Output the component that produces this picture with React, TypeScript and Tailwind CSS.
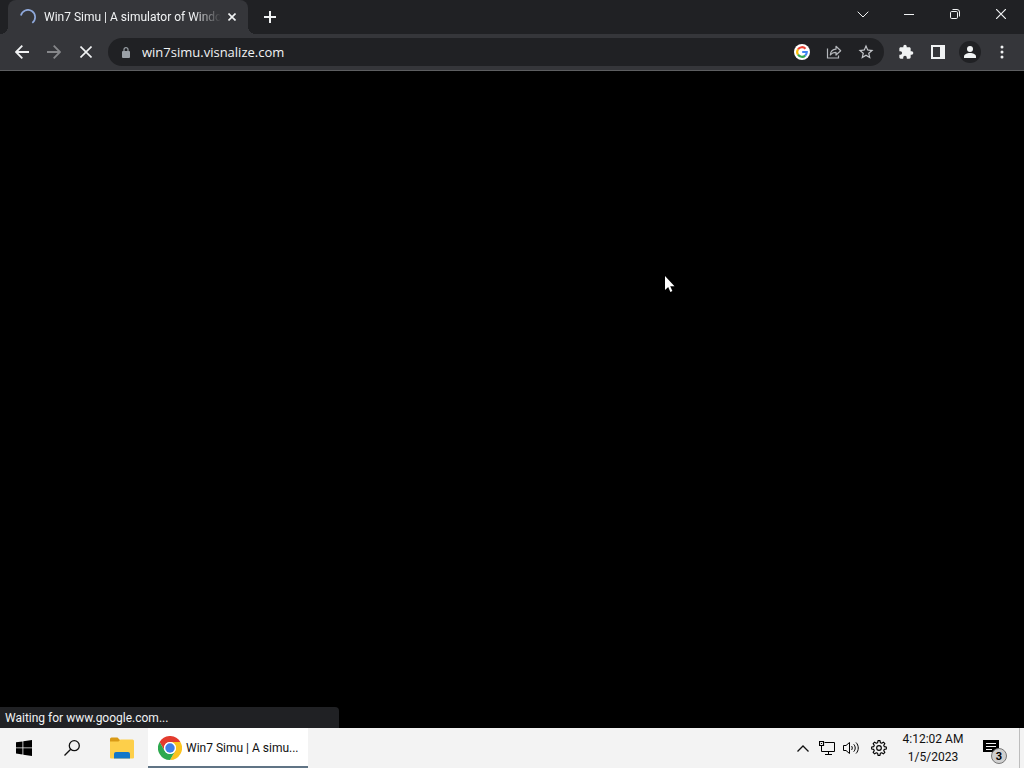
import React, { useState } from 'react';

const ICON_BTN = 'flex h-7 w-8 shrink-0 items-center justify-center rounded-full';

function ChromeLogo() {
  return (
    <svg width="24" height="24" viewBox="0 0 48 48" className="shrink-0">
      <circle cx="24" cy="24" r="24" fill="#fff" />
      <path d="M3.2 12A24 24 0 0 1 44.8 12H24a12 12 0 0 0-10.4 18z" fill="#e33b2e" />
      <path d="M44.8 12A24 24 0 0 1 24 48l10.4-18A12 12 0 0 0 24 12z" fill="#fcc31e" />
      <path d="M24 48A24 24 0 0 1 3.2 12l10.4 18a12 12 0 0 0 20.8 0z" fill="#2da94f" />
      <circle cx="24" cy="24" r="12" fill="#fff" />
      <circle cx="24" cy="24" r="9.4" fill="#3f7fe8" />
    </svg>
  );
}

function FolderIcon() {
  return (
    <svg width="24" height="22" viewBox="0 0 24 22">
      <path d="M0 2a1.500 1.500 0 0 1 1.500-1.500h6L10 3v4H0z" fill="#d99a16" />
      <path d="M0 4.500h8.500L10.500 2.500H22.500A1.500 1.500 0 0 1 24 4v16.500a1 1 0 0 1-1 1H1a1 1 0 0 1-1-1z" fill="#fdcf4a" />
      <path d="M4 21.500V17a2 2 0 0 1 2-2h12a2 2 0 0 1 2 2v4.500z" fill="#1277c9" />
    </svg>
  );
}

function GoogleBadge() {
  return (
    <svg width="16" height="16" viewBox="0 0 16 16">
      <circle cx="8" cy="8" r="8" fill="#fff" />
      <g fill="none" strokeWidth="2.100">
        <path d="M4 5.300A4.800 4.800 0 0 1 11.500 4.700" stroke="#ea4335" />
        <path d="M4 5.300A4.800 4.800 0 0 0 4 10.700" stroke="#fbbc05" />
        <path d="M4 10.700A4.800 4.800 0 0 0 11.200 11.600" stroke="#34a853" />
        <path d="M11.200 11.600A4.800 4.800 0 0 0 12.800 8H8.200" stroke="#4285f4" />
      </g>
    </svg>
  );
}

function TabStrip() {
  return (
    <div className="flex h-[34px] items-stretch pl-2 text-[#f1f3f4]">
      <div className="relative flex w-60 items-center rounded-t-lg bg-[#35363a] pl-3 pr-2">
        <span className="absolute -left-2 bottom-0 h-2 w-2 bg-[radial-gradient(circle_at_0_0,transparent_8px,#35363a_8px)]" />
        <span className="absolute -right-2 bottom-0 h-2 w-2 bg-[radial-gradient(circle_at_100%_0,transparent_8px,#35363a_8px)]" />
        <svg width="16" height="16" viewBox="0 0 16 16" fill="none" className="shrink-0">
          <path d="M.9 6.500A7.200 7.200 0 1 1 12.300 13.800" stroke="#8fa9dc" strokeWidth="1.700" />
        </svg>
        <button
          type="button"
          role="tab"
          aria-selected="true"
          className="ml-2 w-[180px] whitespace-nowrap text-left [mask-image:linear-gradient(to_right,#000_150px,transparent_177px)]"
        >
          Win7 Simu | A simulator of Windo
        </button>
        <button type="button" aria-label="Close tab" className="flex h-4 w-4 shrink-0 items-center justify-center">
          <svg width="8" height="8" viewBox="0 0 8 8" stroke="currentColor" strokeWidth="1.600">
            <path d="M.5.5l7 7M7.500.5l-7 7" />
          </svg>
        </button>
      </div>
      <button type="button" aria-label="New tab" className="ml-2 flex w-7 items-center justify-center">
        <svg width="12" height="12" viewBox="0 0 12 12" stroke="currentColor" strokeWidth="2">
          <path d="M6 0v12M0 6h12" />
        </svg>
      </button>

      <div className="ml-auto flex h-7">
        <button type="button" aria-label="Search tabs" className="flex w-[46px] items-center justify-center">
          <svg width="12" height="7" viewBox="0 0 12 7" fill="none" stroke="currentColor">
            <path d="M.7.7L6 6 11.300.7" />
          </svg>
        </button>
        <button type="button" aria-label="Minimize" className="flex w-[46px] items-center justify-center">
          <svg width="10" height="10" viewBox="0 0 10 10" stroke="currentColor">
            <path d="M0 5.500h10" />
          </svg>
        </button>
        <button type="button" aria-label="Restore" className="flex w-[46px] items-center justify-center">
          <svg width="10" height="10" viewBox="0 0 10 10" fill="none" stroke="currentColor">
            <rect x=".5" y="2.500" width="7" height="7" rx="1.200" />
            <path d="M2.500 .5H7a2.500 2.500 0 0 1 2.500 2.500v4.500" />
          </svg>
        </button>
        <button type="button" aria-label="Close" className="flex w-[46px] items-center justify-center">
          <svg width="10" height="10" viewBox="0 0 10 10" stroke="currentColor" strokeWidth="1.200">
            <path d="M0 0l10 10M10 0L0 10" />
          </svg>
        </button>
      </div>
    </div>
  );
}

function Toolbar() {
  const [url, setUrl] = useState('win7simu.visnalize.com');

  return (
    <div className="flex h-[37px] items-center border-b border-[#5d5e60] bg-[#35363a] px-1.5 text-[#f1f3f4]">
      <button type="button" aria-label="Back" className={ICON_BTN}>
        <svg width="14" height="14" viewBox="0 0 14 14" fill="none" stroke="currentColor" strokeWidth="1.800">
          <path d="M14 7H1.500M7.300 .7L1 7l6.300 6.300" />
        </svg>
      </button>
      <button type="button" aria-label="Forward" className={`${ICON_BTN} text-[#86878a]`}>
        <svg width="14" height="14" viewBox="0 0 14 14" fill="none" stroke="currentColor" strokeWidth="1.800">
          <path d="M0 7h12.500M6.700 .7L13 7l-6.300 6.300" />
        </svg>
      </button>
      <button type="button" aria-label="Stop loading" className={ICON_BTN}>
        <svg width="12" height="12" viewBox="0 0 12 12" stroke="currentColor" strokeWidth="1.600">
          <path d="M.5.5l11 11M11.500.5l-11 11" />
        </svg>
      </button>

      <div className="mx-1.5 flex h-7 min-w-0 flex-1 items-center rounded-full bg-[#202124] pl-3.5 pr-0.5">
        <svg width="8" height="11" viewBox="0 0 8 11" fill="none" className="shrink-0">
          <rect y="4" width="8" height="7" rx="1" fill="#9aa0a6" />
          <path d="M2 4.500V2.600a2 2 0 0 1 4 0v1.900" stroke="#9aa0a6" strokeWidth="1.200" />
        </svg>
        <input
          type="text"
          aria-label="Address"
          value={url}
          onChange={e => setUrl(e.target.value)}
          className="ml-3 min-w-0 flex-1 bg-transparent font-['Open_Sans','Noto_Sans',sans-serif] text-[13px] leading-5 outline-none"
        />
        <button type="button" aria-label="Search with Google" className={ICON_BTN}>
          <GoogleBadge />
        </button>
        <button type="button" aria-label="Share" className={`${ICON_BTN} text-[#b4b7bb]`}>
          <svg width="16" height="14" viewBox="0 0 16 14" fill="none" stroke="currentColor" strokeWidth="1.200">
            <path d="M1.500 3.500v9.500h11v-2.500" />
            <path d="M4.300 10c.3-3.600 2.200-5.600 5.700-5.800V1.300L14.700 5.700 10 10V7.300C7.500 7.300 5.700 8.100 4.300 10z" strokeLinejoin="round" />
          </svg>
        </button>
        <button type="button" aria-label="Bookmark this tab" className={`${ICON_BTN} text-[#c4c7cb]`}>
          <svg width="18" height="18" viewBox="0 0 24 24" fill="currentColor">
            <path d="M22 9.240l-7.190-.62L12 2 9.190 8.630 2 9.240l5.460 4.730L5.820 21 12 17.270 18.180 21l-1.630-7.030L22 9.240zM12 15.400l-3.760 2.270 1-4.280-3.320-2.880 4.380-.38L12 6.100l1.710 4.040 4.380.38-3.320 2.880 1 4.280L12 15.400z" />
          </svg>
        </button>
      </div>

      <button type="button" aria-label="Extensions" className={ICON_BTN}>
        <svg width="16" height="16" viewBox="0 0 24 24" fill="currentColor">
          <path d="M20.500 11H19V7c0-1.100-.9-2-2-2h-4V3.500a2.500 2.500 0 0 0-5 0V5H4c-1.100 0-1.990.9-1.990 2v3.800H3.500a2.700 2.700 0 0 1 0 5.400H2V20c0 1.100.9 2 2 2h3.800v-1.500a2.700 2.700 0 0 1 5.400 0V22H17c1.100 0 2-.9 2-2v-4h1.500a2.500 2.500 0 0 0 0-5z" />
        </svg>
      </button>
      <button type="button" aria-label="Side panel" className={ICON_BTN}>
        <svg width="14" height="14" viewBox="0 0 14 14">
          <path fillRule="evenodd" d="M0 0h14v14H0zM2 2v10h7V2z" fill="currentColor" />
        </svg>
      </button>
      <button type="button" aria-label="Profile" className={ICON_BTN}>
        <svg width="22" height="22" viewBox="0 0 22 22">
          <circle cx="11" cy="11" r="11" fill="#202124" />
          <circle cx="11" cy="8" r="3" fill="#f1f3f4" />
          <path d="M5 17v-1.500C5 13.300 8 12 11 12s6 1.300 6 3.500V17z" fill="#f1f3f4" />
        </svg>
      </button>
      <button type="button" aria-label="Menu" className={ICON_BTN}>
        <svg width="4" height="14" viewBox="0 0 4 14" fill="currentColor">
          <circle cx="2" cy="2" r="1.500" />
          <circle cx="2" cy="7" r="1.500" />
          <circle cx="2" cy="12" r="1.500" />
        </svg>
      </button>
    </div>
  );
}

function SystemTray() {
  return (
    <div className="ml-auto flex items-stretch">
      <button type="button" aria-label="Show hidden icons" className="flex w-6 items-center justify-center">
        <svg width="12" height="7" viewBox="0 0 12 7" fill="none" stroke="currentColor" strokeWidth="1.300">
          <path d="M.5 6.500L6 1l5.500 5.500" />
        </svg>
      </button>
      <button type="button" aria-label="Network" className="flex w-6 items-center justify-center">
        <svg width="16" height="14" viewBox="0 0 16 14" fill="none" stroke="#000">
          <path d="M5.500 1.500h10v9h-13v-6M9.500 10.500v3M6 13.500h7" />
          <path d="M.5.5h4v4h-4z" strokeWidth="1.200" />
          <path d="M2 2.500h1" />
        </svg>
      </button>
      <button type="button" aria-label="Volume" className="flex w-6 items-center justify-center">
        <svg width="17" height="14" viewBox="0 0 17 14" fill="none" stroke="#000">
          <path d="M.5 4.500H3L6.500 1.500v11L3 9.500H.5z" />
          <path d="M8.500 5c1 1 1 3 0 4M10.700 3.300c2 2 2 5.400 0 7.400M13 1.500c3 3 3 8 0 11" />
        </svg>
      </button>
      <button type="button" aria-label="Settings" className="flex w-8 items-center justify-center">
        <svg width="16" height="16" viewBox="0 0 24 24" fill="none" stroke="#000" strokeWidth="1.700" strokeLinejoin="round">
          <path d="M10.500 1h3l.5 3 2.100.9L18.600 3.200l2.200 2.200-1.700 2.500.9 2.100 3 .5v3l-3 .5-.9 2.100 1.700 2.500-2.200 2.200-2.500-1.700-2.100.9-.5 3h-3l-.5-3-2.100-.9-2.500 1.700-2.200-2.200 1.700-2.500L4 14l-3-.5v-3l3-.5.9-2.100L3.200 5.400l2.200-2.200 2.500 1.700L10 4z" />
          <circle cx="12" cy="12" r="3.500" />
        </svg>
      </button>
      <button type="button" className="w-[76px] text-center leading-[18px]">
        <span className="block whitespace-nowrap">4:12:02 AM</span>
        <span className="block whitespace-nowrap">1/5/2023</span>
      </button>
      <button type="button" aria-label="3 notifications" className="relative flex w-12 items-center justify-center">
        <svg width="24" height="24" viewBox="0 0 24 24">
          <path d="M0 4h16v12h-4v3.500L8.500 16H0z" fill="#000" />
          <path d="M3 7.500h10M3 10.500h10M3 13.500h6" stroke="#f3f3f3" />
        </svg>
        <span className="absolute bottom-1 right-3 flex h-4 w-4 items-center justify-center rounded-full border border-[#777] bg-[#d0d0d0] text-[11px] font-bold leading-none text-black">
          3
        </span>
      </button>
      <button type="button" aria-label="Show desktop" className="w-[5px] border-l border-[#bdbdbd]" />
    </div>
  );
}

function Taskbar() {
  return (
    <footer className="flex h-10 items-stretch bg-[#f3f3f3] text-[#111]">
      <button type="button" aria-label="Start" className="flex w-12 items-center justify-center">
        <svg width="16" height="16" viewBox="0 0 16 16" fill="#000">
          <path d="M0 2.300L6.500 1.400v6.100H0zM7.300 1.300L16 0v7.500H7.300zM0 8.300h6.500v6.200L0 13.600zM7.300 8.300H16V16l-8.700-1.300z" />
        </svg>
      </button>
      <button type="button" aria-label="Search" className="flex w-12 items-center justify-center">
        <svg width="16" height="16" viewBox="0 0 16 16" fill="none" stroke="#111" strokeWidth="1.300">
          <circle cx="10.300" cy="5.700" r="5" />
          <path d="M6.700 9.300L.5 15.500" />
        </svg>
      </button>
      <button type="button" aria-label="File Explorer" className="flex w-[52px] items-center justify-center">
        <FolderIcon />
      </button>
      <button
        type="button"
        className="flex w-40 items-center gap-1 border-b-2 border-[#607485] bg-white pl-2.5 pt-0.5 text-left"
      >
        <ChromeLogo />
        <span className="whitespace-nowrap">Win7 Simu | A simu...</span>
      </button>
      <SystemTray />
    </footer>
  );
}

export default function App() {
  return (
    <div className="flex min-h-screen flex-col bg-[#202124] font-['Roboto','Open_Sans',sans-serif] text-xs">
      <header>
        <TabStrip />
        <Toolbar />
      </header>

      <main className="relative flex-1 bg-black">
        <svg
          width="11"
          height="18"
          viewBox="0 0 11 18"
          className="absolute left-[664px] top-[204px]"
        >
          <path d="M1 1v14l3.200-3 2.200 5 2-.9-2.200-4.800h4.300z" fill="#fff" />
        </svg>
        <div className="absolute bottom-0 left-0 w-[339px] rounded-tr bg-[#202124] pb-0.5 pl-[5px] pt-[3px] text-[#f1f3f4]">
          Waiting for www.google.com...
        </div>
      </main>

      <Taskbar />
    </div>
  );
}
